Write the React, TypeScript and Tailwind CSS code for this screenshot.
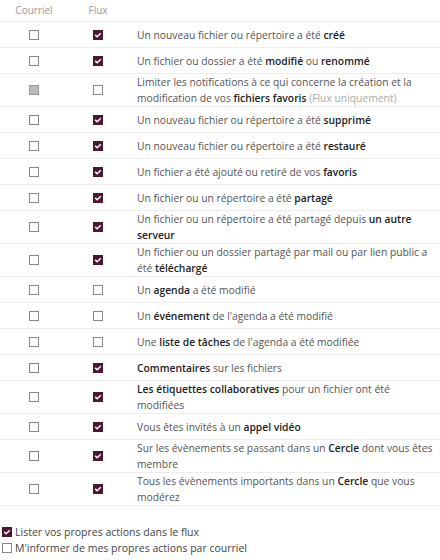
import React from 'react';

type Row = {
  text: React.ReactNode;
  mail: 'off' | 'on' | 'disabled';
  flux: 'off' | 'on' | 'disabled';
};

const B = ({ children }: { children: React.ReactNode }) => (
  <strong className="font-semibold text-[#222]">{children}</strong>
);

// line breaks follow the reference wrapping
const rows: Row[] = [
  { text: <>Un nouveau fichier ou répertoire a été <B>créé</B></>, mail: 'off', flux: 'on' },
  { text: <>Un fichier ou dossier a été <B>modifié</B> ou <B>renommé</B></>, mail: 'off', flux: 'on' },
  {
    text: (
      <>
        Limiter les notifications à ce qui concerne la création et la
        <br />
        modification de vos <B>fichiers favoris</B> <span className="text-[#aaa]">(Flux uniquement)</span>
      </>
    ),
    mail: 'disabled',
    flux: 'off',
  },
  { text: <>Un nouveau fichier ou répertoire a été <B>supprimé</B></>, mail: 'off', flux: 'on' },
  { text: <>Un nouveau fichier ou répertoire a été <B>restauré</B></>, mail: 'off', flux: 'on' },
  { text: <>Un fichier a été ajouté ou retiré de vos <B>favoris</B></>, mail: 'off', flux: 'on' },
  { text: <>Un fichier ou un répertoire a été <B>partagé</B></>, mail: 'off', flux: 'on' },
  { text: <>Un fichier ou un répertoire a été partagé depuis <B>un autre<br />serveur</B></>, mail: 'off', flux: 'on' },
  { text: <>Un fichier ou un dossier partagé par mail ou par lien public a<br />été <B>téléchargé</B></>, mail: 'off', flux: 'on' },
  { text: <>Un <B>agenda</B> a été modifié</>, mail: 'off', flux: 'off' },
  { text: <>Un <B>événement</B> de l'agenda a été modifié</>, mail: 'off', flux: 'off' },
  { text: <>Une <B>liste de tâches</B> de l'agenda a été modifiée</>, mail: 'off', flux: 'off' },
  { text: <><B>Commentaires</B> sur les fichiers</>, mail: 'off', flux: 'on' },
  { text: <><B>Les étiquettes collaboratives</B> pour un fichier ont été<br />modifiées</>, mail: 'off', flux: 'on' },
  { text: <>Vous êtes invités à un <B>appel vidéo</B></>, mail: 'off', flux: 'on' },
  { text: <>Sur les évènements se passant dans un <B>Cercle</B> dont vous êtes<br />membre</>, mail: 'off', flux: 'on' },
  { text: <>Tous les évènements importants dans un <B>Cercle</B> que vous<br />modérez</>, mail: 'off', flux: 'on' },
];

const Check = ({ state }: { state: 'off' | 'on' | 'disabled' }) => {
  if (state === 'on') {
    return (
      <span className="flex h-[10px] w-[10px] shrink-0 items-center justify-center bg-[#4d1634]">
        <svg width="8" height="8" viewBox="0 0 8 8" fill="none">
          <path d="M1.2 3.9 L3.2 5.8 L6.8 2.2" stroke="white" strokeWidth="1.5" />
        </svg>
      </span>
    );
  }
  if (state === 'disabled') {
    return <span className="block h-[10px] w-[10px] shrink-0 border border-[#999] bg-[#bbb]" />;
  }
  return <span className="block h-[10px] w-[10px] shrink-0 border border-[#888] bg-white" />;
};

export default function App() {
  return (
    <div className="h-[560px] w-[440px] overflow-hidden bg-white text-[#555]" style={{ fontFamily: '"Open Sans", "Noto Sans", sans-serif' }}>
      <div className="grid h-[22px] grid-cols-[68px_60px_1fr] items-center border-b border-[#ededed] text-[10px] text-[#999]">
        <div className="text-center">Courriel</div>
        <div className="text-center">Flux</div>
        <div />
      </div>
      {rows.map((r, i) => (
        <div key={i} className="grid min-h-[26px] grid-cols-[68px_60px_1fr] items-center border-b border-[#ededed] text-[10.3px] leading-[16px]">
          <div className="flex justify-center">
            <Check state={r.mail} />
          </div>
          <div className="flex justify-center">
            <Check state={r.flux} />
          </div>
          <div className="pl-[9px] pr-[2px]">{r.text}</div>
        </div>
      ))}
      <div className="mt-[18px] flex flex-col pl-[2px] text-[10.5px] leading-[16px] text-[#444]">
        <label className="flex items-center gap-[3px]">
          <Check state="on" />
          <span>Lister vos propres actions dans le flux</span>
        </label>
        <label className="flex items-center gap-[3px]">
          <Check state="off" />
          <span>M'informer de mes propres actions par courriel</span>
        </label>
      </div>
    </div>
  );
}
